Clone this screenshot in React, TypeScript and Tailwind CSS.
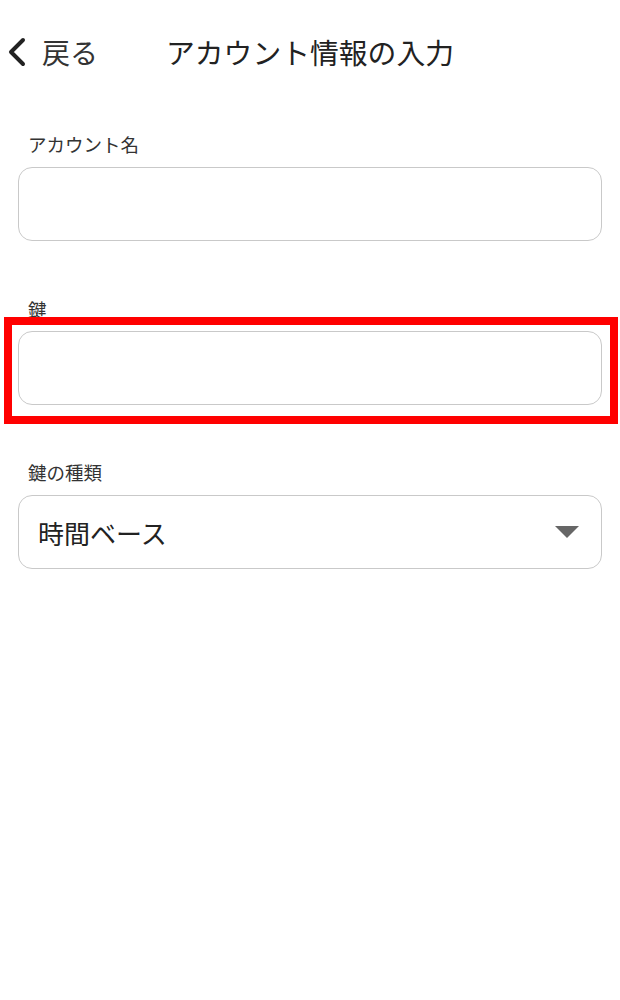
const font = { fontFamily: '"Noto Sans CJK JP", "Noto Sans", sans-serif' }

function Field({ label, children, className = '' }: { label: string; children?: React.ReactNode; className?: string }) {
  return (
    <div className={className}>
      <div className="h-[24px] pl-[10px] text-[18.5px] leading-[24px] text-[#333]">{label}</div>
      {children}
    </div>
  )
}

export default function App() {
  return (
    <div className="min-h-[1000px] w-[620px] bg-white text-[#222]" style={font}>
      <header className="flex h-[103px] items-center">
        <button className="flex items-center pl-[6px] text-[28px] text-[#333]">
          <svg width="22" height="30" viewBox="0 0 22 30" fill="none" stroke="#222" strokeWidth="4" strokeLinecap="round" strokeLinejoin="round">
            <path d="M17 3 L5 15 L17 27" />
          </svg>
          <span className="ml-[14px]">戻る</span>
        </button>
        <h1 className="ml-[68px] text-[28.8px] font-normal text-[#222]">アカウント情報の入力</h1>
      </header>

      <div className="px-[18px]">
        <Field label="アカウント名" className="mt-[29px]">
          <div className="mt-[11px] h-[74px] rounded-[14px] border-[1.5px] border-[#c9c9c9]" />
        </Field>

        <Field label="鍵" className="mt-[56px]">
          <div className="relative mt-[10px]">
            <div className="h-[74px] rounded-[14px] border-[1.5px] border-[#c9c9c9]" />
            <div className="pointer-events-none absolute -top-[14px] -left-[14px] -right-[16px] -bottom-[19px] border-[8px] border-[#ff0000]" />
          </div>
        </Field>

        <Field label="鍵の種類" className="mt-[55px]">
          <div className="mt-[11px] flex h-[74px] items-center justify-between rounded-[14px] border-[1.5px] border-[#c9c9c9] pl-[19px] pr-[22px]">
            <span className="text-[26px] text-[#222]">時間ベース</span>
            <svg width="24" height="12" viewBox="0 0 24 12">
              <path d="M0 0 H24 L12 12 Z" fill="#666" />
            </svg>
          </div>
        </Field>
      </div>
    </div>
  )
}
